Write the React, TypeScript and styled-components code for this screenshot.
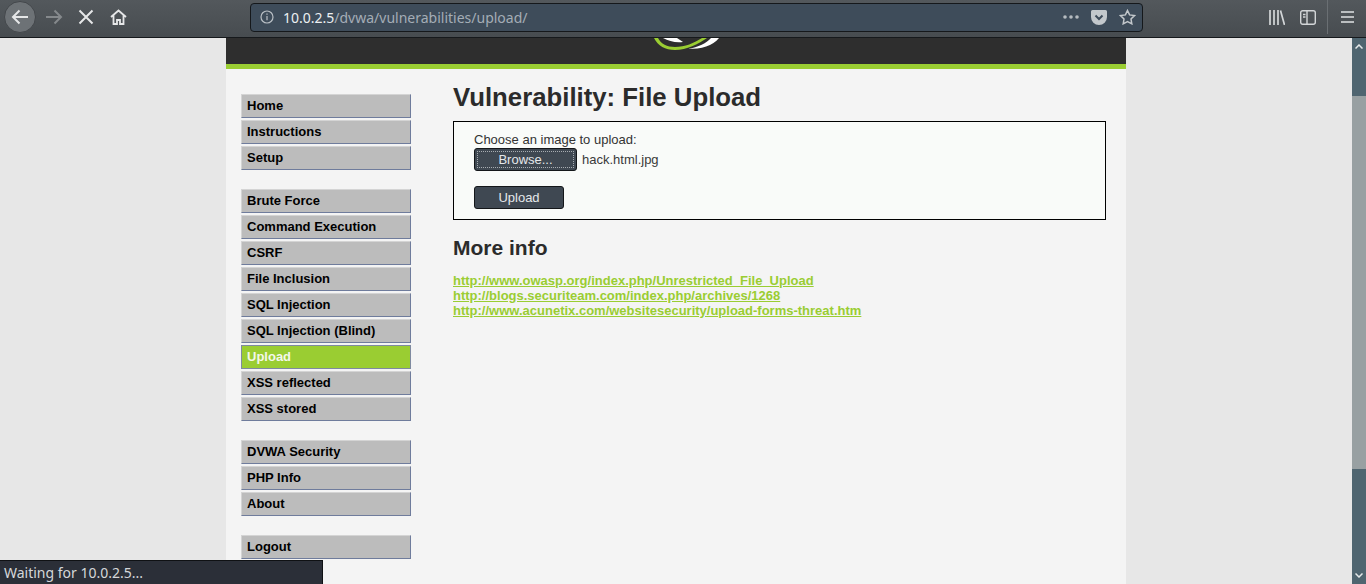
import React from "react";
import styled, { createGlobalStyle } from "styled-components";

const Global = createGlobalStyle`
  html, body { margin: 0; padding: 0; height: 100%; overflow: hidden; }
  #root { height: 584px; }
  * { box-sizing: border-box; }
`;
const Browser = styled.div`
  position: relative; width: 1366px; height: 584px; display: flex; flex-direction: column; overflow: hidden;
  font-family: "Liberation Sans", Arial, sans-serif;
`;
const Toolbar = styled.header`
  height: 38px; flex: none; display: flex; align-items: center; padding-bottom: 3px; background: linear-gradient(#53585c, #474c50); border-bottom: 1px solid #16191c;
`;
const NavCluster = styled.div`
  display: flex; align-items: center; width: 250px; padding-left: 4px; flex: none;
`;
const BackButton = styled.div`
  width: 32px; height: 32px; border-radius: 50%; background: #6d7276; border: 1px solid #43474b; display: flex; align-items: center; justify-content: center;
`;
const NavIcon = styled.div<{ $w: number }>`
  width: ${(p) => p.$w}px; height: 32px; display: flex; align-items: center; justify-content: center;
`;
const UrlBar = styled.div`
  width: 893px; height: 29px; flex: none; background: #3e4c5a; border: 1px solid #15181b; border-radius: 4px; display: flex; align-items: center; padding: 0 6px 0 9px;
`;
const Url = styled.div`
  flex: 1; margin-left: 9px; font: 14px "Noto Sans", "Open Sans", sans-serif; color: #a4adb6; white-space: nowrap;
  b { font-weight: 400; color: #eceff1; }
`;
const UrlActions = styled.div`display: flex; align-items: center; gap: 12px;`;
const RightTools = styled.div`
  flex: 1; display: flex; align-items: center; height: 34px; padding-left: 126px;
`;
const ToolIcon = styled.div<{ $ml?: number }>`
  display: flex; margin-left: ${(p) => p.$ml ?? 0}px;
`;
const Separator = styled.div`width: 1px; height: 34px; background: #6a6f73; margin-left: 11px;`;
const Viewport = styled.div`flex: 1; display: flex; min-height: 0;`;
const PageArea = styled.div`flex: 1; background: #e7e7e7; display: flex; justify-content: center; overflow: hidden;`;
const Container = styled.div`width: 900px; height: 546px; background: #f4f4f4; display: flex; flex-direction: column;`;
const Header = styled.div`
  height: 31px; flex: none; background: #2e2e2e; border-bottom: 5px solid #9acd32; display: flex; justify-content: center; padding-left: 25px;
`;
const Main = styled.div`display: flex; padding: 25px 0 0 15px;`;
const Menu = styled.nav`width: 170px; flex: none; display: flex; flex-direction: column; gap: 19px;`;
const MenuGroup = styled.ul`list-style: none; margin: 0; padding: 0; display: flex; flex-direction: column; gap: 2px;`;
const MenuItem = styled.li<{ $active?: boolean }>`
  height: 24px; padding: 0 0 2px 5px; display: flex; align-items: center; font-size: 13px; font-weight: 700;
  color: ${(p) => (p.$active ? "#f4f7ea" : "#000")};
  background: ${(p) => (p.$active ? "#9acd32" : "#bcbcbc")};
  border-style: solid; border-width: 1px;
  border-color: ${(p) => (p.$active ? "#7f8aa0" : "#d4d4d4 #6f7c9c #6f7c9c #d4d4d4")};
`;
const Content = styled.main`width: 653px; margin-left: 42px;`;
const Title = styled.h1`margin: -12px 0 9px; font-size: 25.75px; line-height: 30px; font-weight: 700; color: #2b2b2b; height: 30px;`;
const UploadBox = styled.div`
  height: 99px; border: 1px solid #000; background: #f9fbf9; padding: 10px 20px; font-size: 13px; color: #333;
`;
const Label = styled.div`line-height: 15px;`;
const FileRow = styled.div`display: flex; align-items: center; gap: 5px; height: 24px; color: #3a3a3a;`;
const Button = styled.div<{ $w: number }>`
  width: ${(p) => p.$w}px; height: 23px; background: #3f4852; border: 1px solid #14171a; border-radius: 3px; color: #e4e7ea; font: 13px "Liberation Sans", sans-serif;
  display: flex; align-items: center; justify-content: center; position: relative;
`;
const FocusRing = styled.span`
  position: absolute; inset: 2px; border: 1px dotted #a8adb2;
`;
const SubmitRow = styled.div`margin-top: 15px;`;
const MoreInfo = styled.h2`margin: 16px 0 13px; font-size: 21px; line-height: 24px; font-weight: 700; color: #2b2b2b;`;
const LinkList = styled.div`display: flex; flex-direction: column;`;
const Link = styled.a`font-size: 13px; line-height: 15px; font-weight: 700; color: #9acd32; text-decoration: underline;`;
const Scrollbar = styled.div`
  width: 14px; flex: none; background: #4f6570; display: flex; flex-direction: column; align-items: center;
`;
const ScrollArrow = styled.div`height: 17px; flex: none; display: flex; align-items: center; justify-content: center;`;
const ScrollGap = styled.div<{ $h?: number }>`height: ${(p) => (p.$h ? `${p.$h}px` : "auto")}; flex: ${(p) => (p.$h ? "none" : 1)};`;
const ScrollThumb = styled.div`width: 14px; height: 373px; flex: none; background: #98a0a2;`;
const StatusBar = styled.div`
  position: absolute; left: 0; bottom: 0; width: 323px; height: 24px; background: #2b2f38; border-top: 1px solid #0f1114; border-right: 1px solid #0f1114; color: #d5d7da;
  font: 14px "Noto Sans", "Open Sans", sans-serif; padding-left: 4px; display: flex; align-items: center;
`;

const groups = [
  ["Home", "Instructions", "Setup"],
  ["Brute Force", "Command Execution", "CSRF", "File Inclusion", "SQL Injection", "SQL Injection (Blind)", "Upload", "XSS reflected", "XSS stored"],
  ["DVWA Security", "PHP Info", "About"],
  ["Logout"],
];
const links = [
  "http://www.owasp.org/index.php/Unrestricted_File_Upload",
  "http://blogs.securiteam.com/index.php/archives/1268",
  "http://www.acunetix.com/websitesecurity/upload-forms-threat.htm",
];

export default function App() {
  return (
    <Browser>
      <Global />
      <Toolbar>
        <NavCluster>
          <BackButton>
            <svg width="18" height="16" viewBox="0 0 18 16" fill="none" stroke="#e6e7e8" strokeWidth="2"><path d="M17 8H2M8.500 1.500 2 8l6.500 6.500" /></svg>
          </BackButton>
          <NavIcon $w={36}>
            <svg width="18" height="16" viewBox="0 0 18 16" fill="none" stroke="#85898c" strokeWidth="2"><path d="M1 8h15M9.500 1.500 16 8l-6.500 6.500" /></svg>
          </NavIcon>
          <NavIcon $w={28}>
            <svg width="16" height="16" viewBox="0 0 16 16" fill="none" stroke="#e6e7e8" strokeWidth="2"><path d="m1.500 1.500 13 13M14.500 1.500l-13 13" /></svg>
          </NavIcon>
          <NavIcon $w={36}>
            <svg width="17" height="16" viewBox="0 0 17 16" fill="none" stroke="#e6e7e8" strokeWidth="1.800"><path d="M1 8 8.500 1.500 16 8M3.500 6.500V15h3.500v-4h3v4h3.500V6.500" /></svg>
          </NavIcon>
        </NavCluster>
        <UrlBar>
          <svg width="14" height="14" viewBox="0 0 14 14" fill="none" stroke="#b9bfc5" strokeWidth="1.200"><circle cx="7" cy="7" r="6" /><path d="M7 6v4.200M7 3.500v1.300" /></svg>
          <Url><b>10.0.2.5</b>/dvwa/vulnerabilities/upload/</Url>
          <UrlActions>
            <svg width="16" height="4" viewBox="0 0 16 4" fill="#b5bbc0"><circle cx="2" cy="2" r="1.800" /><circle cx="8" cy="2" r="1.800" /><circle cx="14" cy="2" r="1.800" /></svg>
            <svg width="16" height="15" viewBox="0 0 16 15"><path d="M1.500 0h13A1.500 1.500 0 0 1 16 1.500V7a8 8 0 0 1-16 0V1.500A1.500 1.500 0 0 1 1.500 0Z" fill="#c3c8cc" /><path d="m4.500 5.500 3.500 3.500 3.500-3.500" fill="none" stroke="#3e4c5a" strokeWidth="2" /></svg>
            <svg width="17" height="16" viewBox="0 0 17 16" fill="none" stroke="#c3c8cc" strokeWidth="1.500"><path d="m8.500 1.500 2.100 4.400 4.900.7-3.500 3.400.8 4.800-4.300-2.300-4.300 2.300.8-4.800L1.500 6.600l4.900-.7Z" /></svg>
          </UrlActions>
        </UrlBar>
        <RightTools>
          <ToolIcon>
            <svg width="16" height="15" viewBox="0 0 16 15" fill="none" stroke="#d3d6d8" strokeWidth="1.700"><path d="M1 0v15M5 0v15M9 0v15M11.500.5l4 14.500" /></svg>
          </ToolIcon>
          <ToolIcon $ml={15}>
            <svg width="16" height="15" viewBox="0 0 16 15" fill="none" stroke="#d3d6d8" strokeWidth="1.400"><rect x=".7" y=".7" width="14.600" height="13.600" rx="2" /><path d="M7 1v13M3 4.500h2.500M3 7h2.500" /></svg>
          </ToolIcon>
          <Separator />
          <ToolIcon $ml={13}>
            <svg width="13" height="12" viewBox="0 0 13 12" fill="none" stroke="#e0e2e4" strokeWidth="1.700"><path d="M0 1h13M0 6h13M0 11h13" /></svg>
          </ToolIcon>
        </RightTools>
      </Toolbar>
      <Viewport>
        <PageArea>
          <Container>
            <Header>
              <svg width="72" height="12" viewBox="0 0 72 12">
                <path d="M1 0C5 8 12 12 22 12 34 12 45 6 54 0L49 0C41 5 32 9 22 9 14 9 8 6 5 0Z" fill="#9acd32" />
                <path d="M10 0C16 3 22 5 30 4L24 0Z" fill="#fff" />
                <path d="M35 11C48 11 60 8 66 0L58 0C54 5 45 9 35 11Z" fill="#fff" />
              </svg>
            </Header>
            <Main>
              <Menu>
                {groups.map((g, i) => (
                  <MenuGroup key={i}>
                    {g.map((m) => (
                      <MenuItem key={m} $active={m === "Upload"}>{m}</MenuItem>
                    ))}
                  </MenuGroup>
                ))}
              </Menu>
              <Content>
                <Title>Vulnerability: File Upload</Title>
                <UploadBox>
                  <Label>Choose an image to upload:</Label>
                  <FileRow>
                    <Button $w={103}><FocusRing />Browse...</Button>
                    hack.html.jpg
                  </FileRow>
                  <SubmitRow><Button $w={90}>Upload</Button></SubmitRow>
                </UploadBox>
                <MoreInfo>More info</MoreInfo>
                <LinkList>
                  {links.map((l) => <Link key={l}>{l}</Link>)}
                </LinkList>
              </Content>
            </Main>
          </Container>
        </PageArea>
        <Scrollbar>
          <ScrollArrow>
            <svg width="8" height="5" viewBox="0 0 8 5" fill="none" stroke="#e6e9ea" strokeWidth="1.500"><path d="m.5 4.500 3.500-3.500 3.500 3.500" /></svg>
          </ScrollArrow>
          <ScrollGap $h={41} />
          <ScrollThumb />
          <ScrollGap />
          <ScrollArrow>
            <svg width="8" height="5" viewBox="0 0 8 5" fill="none" stroke="#e6e9ea" strokeWidth="1.500"><path d="m.5.500 3.500 3.500 3.500-3.500" /></svg>
          </ScrollArrow>
        </Scrollbar>
      </Viewport>
      <StatusBar>Waiting for 10.0.2.5...</StatusBar>
    </Browser>
  );
}
